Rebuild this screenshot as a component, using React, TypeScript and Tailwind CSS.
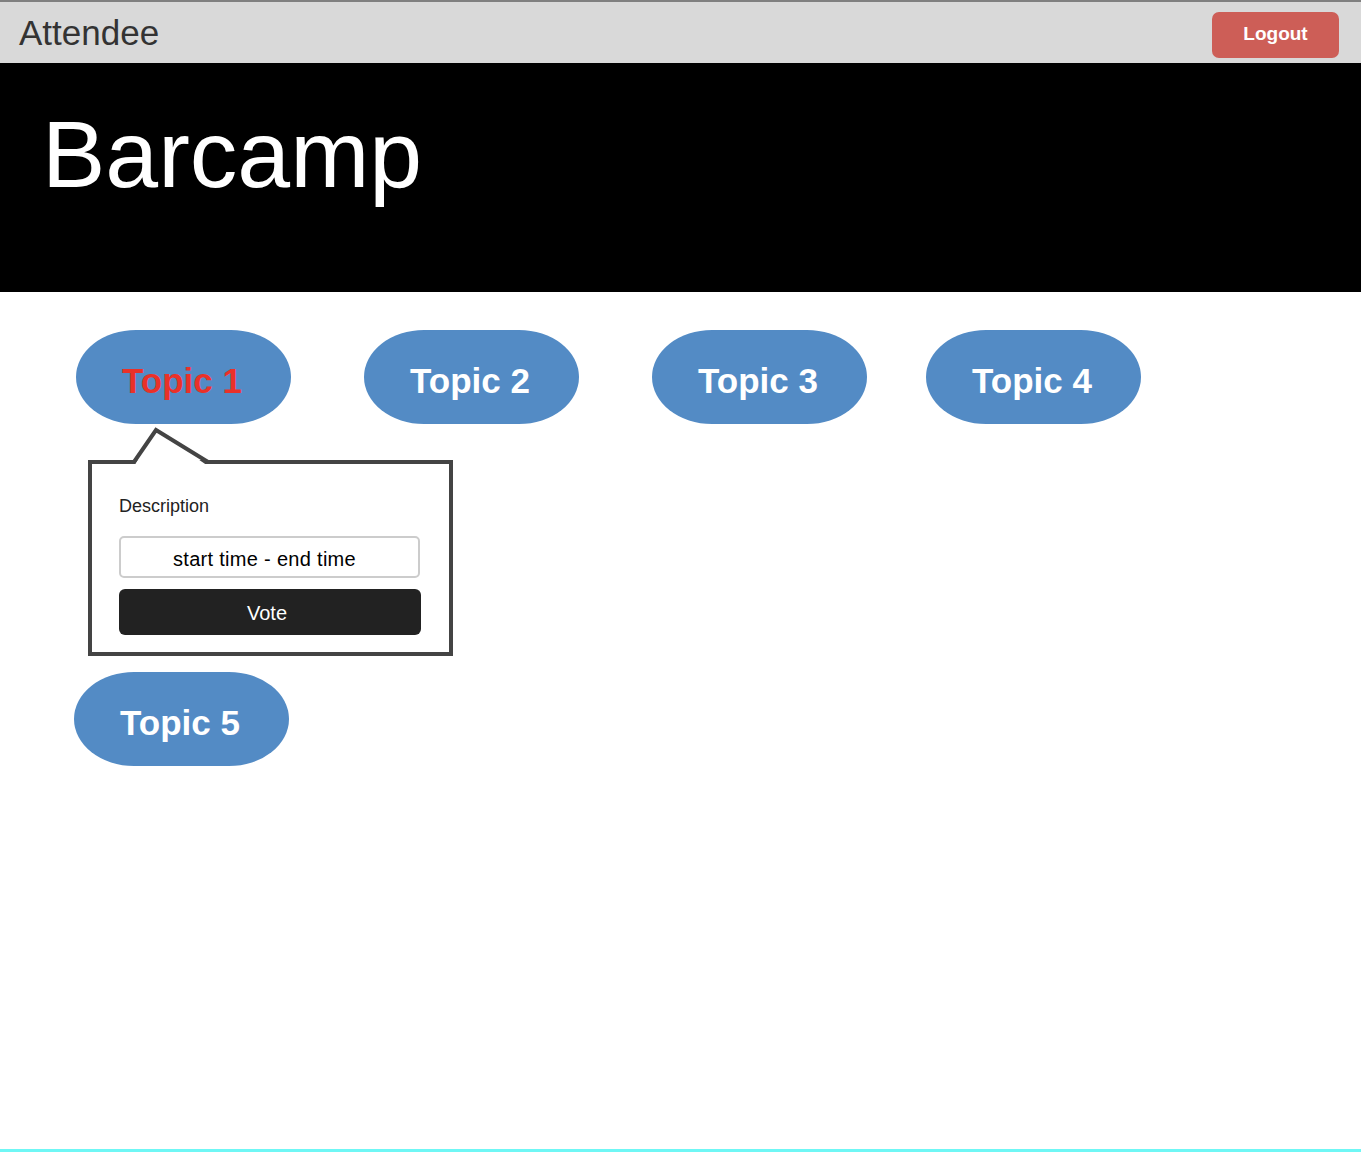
import React from 'react';

const font = { fontFamily: '"Liberation Sans", Arial, sans-serif' };

const TopicPill = ({ label, active = false, className = '' }: { label: string; active?: boolean; className?: string }) => (
  <button
    className={`flex h-[94px] w-[215px] shrink-0 items-center justify-center rounded-[60px/47px] bg-[#538bc5] pr-[3px] pt-[8px] text-[35px] font-bold ${
      active ? 'text-[#ea3129]' : 'text-white'
    } ${className}`}
  >
    {label}
  </button>
);

const TopicPopup = () => (
  <div className="relative ml-[12px] mt-[36px] h-[196px] w-[365px] border-4 border-[#444444] bg-white px-[27px] pt-[33px]">
    {/* speech-bubble notch */}
    <svg
      className="absolute left-[40px] top-[-38px]"
      width="82"
      height="40"
      viewBox="0 0 82 40"
      fill="none"
    >
      <path d="M2 40 L24 4 L76 40 Z" fill="white" />
      <path d="M0 36 L2 36 L24 4 L76 36 L82 36" stroke="#444444" strokeWidth="4" strokeLinejoin="miter" />
    </svg>
    <div className="text-[18px] leading-none text-[#222222]">Description</div>
    <div className="mt-[21px] flex h-[42px] w-[301px] items-center justify-center rounded-[5px] border-2 border-[#cccccc] pr-[10px] pt-[3px] text-[20px] tracking-[0.3px] text-black">
      start time - end time
    </div>
    <button className="mt-[11px] flex h-[46px] w-[302px] items-center justify-center rounded-[6px] bg-[#222222] pr-[6px] pt-[2px] text-[20px] text-white">
      Vote
    </button>
  </div>
);

export default function App() {
  return (
    <div className="box-border h-[1152px] border-b-[3px] border-[#6ff7f5] bg-white" style={font}>
      <header className="box-border flex h-[63px] items-center justify-between border-t-2 border-[#808080] bg-[#d9d9d9] pl-[19px] pr-[22px]">
        <span className="text-[35px] leading-none text-[#333333]">Attendee</span>
        <button className="mt-[4px] flex h-[46px] w-[127px] items-center justify-center rounded-[7px] bg-[#cd5e57] text-[19px] font-bold text-white">
          Logout
        </button>
      </header>

      <section className="h-[229px] bg-black pl-[42px] pt-[34px]">
        <h1 className="text-[95px] font-normal leading-[1.2] text-white">Barcamp</h1>
      </section>

      <main className="pl-[76px] pt-[38px]">
        <div className="flex">
          <TopicPill label="Topic 1" active />
          <TopicPill label="Topic 2" className="ml-[73px]" />
          <TopicPill label="Topic 3" className="ml-[73px]" />
          <TopicPill label="Topic 4" className="ml-[59px]" />
        </div>
        <TopicPopup />
        <TopicPill label="Topic 5" className="-ml-[2px] mt-[16px]" />
      </main>
    </div>
  );
}
